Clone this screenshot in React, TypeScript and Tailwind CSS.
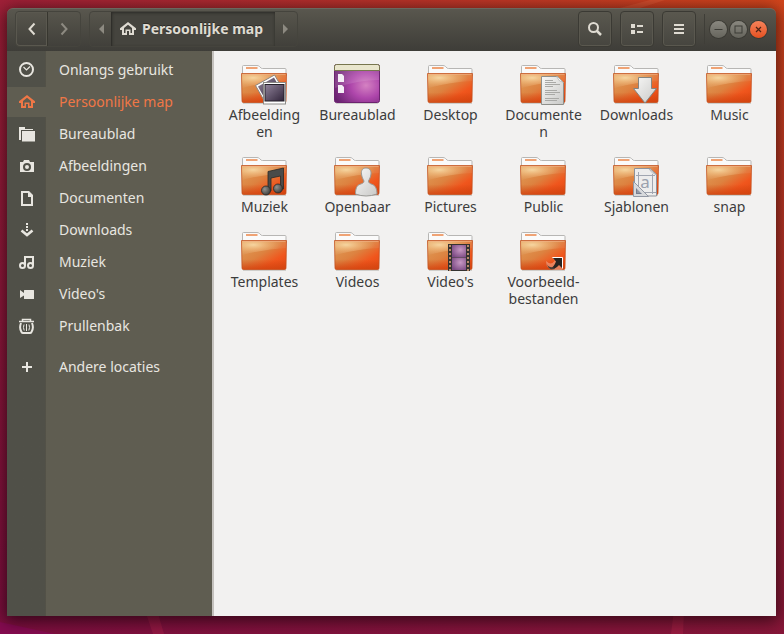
import type { ReactNode } from "react";

const places = [
  { name: "Onlangs gebruikt", icon: "recent" },
  { name: "Persoonlijke map", icon: "home", active: true },
  { name: "Bureaublad", icon: "folder" },
  { name: "Afbeeldingen", icon: "camera" },
  { name: "Documenten", icon: "document" },
  { name: "Downloads", icon: "download" },
  { name: "Muziek", icon: "music" },
  { name: "Video's", icon: "video" },
  { name: "Prullenbak", icon: "trash" },
];

const files = [
  { name: "Afbeelding\nen", emblem: "photos" },
  { name: "Bureaublad", emblem: "desktop" },
  { name: "Desktop" },
  { name: "Documente\nn", emblem: "document" },
  { name: "Downloads", emblem: "download" },
  { name: "Music" },
  { name: "Muziek", emblem: "music" },
  { name: "Openbaar", emblem: "person" },
  { name: "Pictures" },
  { name: "Public" },
  { name: "Sjablonen", emblem: "template" },
  { name: "snap" },
  { name: "Templates" },
  { name: "Videos" },
  { name: "Video's", emblem: "film" },
  { name: "Voorbeeld-\nbestanden", emblem: "link" },
];

const placeIcons: Record<string, ReactNode> = {
  recent: (
    <g fill="none" stroke="currentColor">
      <circle cx="7.5" cy="7.5" r="6.5" strokeWidth="2" />
      <path d="M4.5 5 7.5 8 11 4.5" strokeWidth="1.2" />
    </g>
  ),
  home: (
    <path
      d="M8 1 0 7.3V9H2V14H7V10H9V14H14V9H16V7.300ZM8 3.700 12 7V12H10.500V8.500H5.500V12H4V7Z"
      fill="currentColor"
      fillRule="evenodd"
    />
  ),
  folder: (
    <path
      d="M0 1H6V3H14V4H2V14H0ZM3 5H16V15.500H3Z"
      fill="currentColor"
    />
  ),
  camera: (
    <path
      d="M1 4H4L5 2H10L11 4H15V14H1ZM8 5A4 4 0 1 0 8 13 4 4 0 1 0 8 5ZM8 7A2 2 0 1 1 8 11 2 2 0 1 1 8 7Z"
      fill="currentColor"
      fillRule="evenodd"
    />
  ),
  document: (
    <path
      d="M2 1H10L14 5V16H2ZM4 3V14H12V7H9V3Z"
      fill="currentColor"
      fillRule="evenodd"
    />
  ),
  download: (
    <g>
      <path d="M7 1H9V3H7ZM7 4H9V6H7ZM7 7H9V9H7Z" fill="currentColor" />
      <path d="M2.500 8.500 8 13 13.500 8.500" fill="none" stroke="currentColor" strokeWidth="2.600" />
    </g>
  ),
  music: (
    <g fill="none" stroke="currentColor" strokeWidth="2">
      <circle cx="3.500" cy="11.500" r="2.500" />
      <circle cx="11.500" cy="11.500" r="2.500" />
      <path d="M6 11.500V3H14V11.500" />
    </g>
  ),
  video: (
    <path
      d="M1 4 5 7V4.500Q5 4 5.500 4H14.500Q15 4 15 4.500V12.500Q15 13 14.500 13H5.500Q5 13 5 12.500V9.500L1 12Z"
      fill="currentColor"
    />
  ),
  trash: (
    <g fill="none" stroke="currentColor">
      <path d="M3.500 3V1.500H11.500V3" strokeWidth="1.500" />
      <path d="M0 3.500H15" strokeWidth="1.500" />
      <path
        d="M2 5Q0 10 2.500 14Q3 15 4 15H11Q12 15 12.500 14Q15 10 13 5"
        strokeWidth="2"
      />
      <path d="M5 6.500Q3.800 9.500 5.200 12.500M7.500 6V13M10 6.500Q11.200 9.500 9.800 12.500" />
    </g>
  ),
  plus: <path d="M8 3V13M3 8H13" stroke="currentColor" strokeWidth="2" />,
};

const emblems: Record<string, ReactNode> = {
  photos: (
    <g>
      <path d="M15.500 21.500 34.500 11 44 27 25 38Z" fill="#fff" stroke="#8b8680" />
      <path d="M18 22.500 34 13.500 41 26 25 35Z" fill="url(#photo)" />
      <rect x="23.500" y="18.500" width="22" height="21.500" fill="#fff" stroke="#8b8b87" />
      <rect x="25" y="20.500" width="19" height="16.500" fill="url(#photo)" stroke="#252029" />
    </g>
  ),
  document: (
    <g>
      <path d="M22.500 12.500H38.500L44.500 18.500V40.500H22.500Z" fill="url(#metal)" stroke="#8f8f8a" />
      <path d="M37.500 12.500Q40 18 44.500 18.500L39 13Z" fill="#fff" stroke="#a5a5a1" strokeWidth=".7" />
      <path
        d="M26 16.500H34M26 18.500H37M26 20.500H41M26 22.500H34M26 26.500H38M26 28.500H41M26 30.500H36M26 34.500H40M26 36.500H38"
        stroke="#a9a9a6"
      />
    </g>
  ),
  download: (
    <path
      d="M26.500 13.500H39.500V24.500H44.500L33 39 21.500 24.500H26.500Z"
      fill="url(#metal)"
      stroke="#858580"
    />
  ),
  music: (
    <g>
      <path
        d="M28 15.500 43.500 12V33H40.500V20L31 22V35H28Z"
        fill="#4b4b49"
        stroke="#292927"
        strokeWidth=".8"
      />
      <circle cx="26" cy="34.500" r="4.500" fill="url(#note)" stroke="#292927" strokeWidth=".8" />
      <circle cx="38" cy="32.500" r="4.500" fill="url(#note)" stroke="#292927" strokeWidth=".8" />
    </g>
  ),
  person: (
    <path
      d="M33 12C29.500 12 28 14.500 28.500 18C28.800 21 30 23 31 25C31 27 29 27.500 27 28.300C23.500 29.500 22.500 33 22.500 38Q33 42 44 38C44 33 42.500 29.500 39 28.300C37 27.500 35.500 27 35.500 25C36.500 23 37.700 21 38 18C38.300 14.500 36.500 12 33 12Z"
      fill="url(#metal)"
      stroke="#999995"
    />
  ),
  template: (
    <g>
      <path d="M22.500 12.500H38L44.500 18.500V40H22.500Z" fill="#ededed" stroke="#8d929a" />
      <path d="M37 13Q40 18 44 18.500Z" fill="#fff" stroke="#a9adb2" strokeWidth=".7" />
      <path d="M24 19.500H43M26.500 16V36M40.500 18V38M31 36.500H44" fill="none" stroke="#a1a6b1" />
      <text x="33" y="32" textAnchor="middle" fontFamily="Noto Sans" fontSize="17" fill="#9ba1ad">
        a
      </text>
      <path d="M21.500 25.500V40.500H36.500Z" fill="#d7d9dc" stroke="#9298a4" />
      <path d="M24 32V38H30Z" fill="#777e90" />
      <path d="M25 36H29M25 34H28" stroke="#d7d9dc" strokeWidth=".6" />
    </g>
  ),
  film: (
    <g>
      <rect x="22" y="13" width="22" height="27" fill="#353330" />
      <rect x="26" y="14" width="14" height="12" fill="url(#movie)" />
      <rect x="26" y="26.500" width="14" height="12.500" fill="url(#movie)" />
      <path
        d="M24 14V40M42 14V40"
        stroke="#b98a6a"
        strokeWidth="2"
        strokeDasharray="2 2"
      />
    </g>
  ),
  link: (
    <g>
      <path
        d="M27 30Q27 38 34 39H43.500V26H32.500L36 29.500Q32 35 27 30Z"
        fill="#fff"
        opacity=".3"
      />
      <path d="M34 27H43V37L40 34Q36 39 31 38Q35 36 37 30.500Z" fill="#272421" />
      <path d="M27 31Q28 37 34 36L36 38Q29 40 27 31Z" fill="#4b3b35" />
      <path d="M33.500 26.500H43.500V37.500" fill="none" stroke="#fff" />
    </g>
  ),
};

function IconDefs() {
  return (
    <svg className="absolute size-0" aria-hidden="true">
      <defs>
        <linearGradient id="front" x1="0" y1="0" x2="1" y2="1">
          <stop offset="0" stopColor="#dfa15b" />
          <stop offset=".45" stopColor="#dd8240" />
          <stop offset=".72" stopColor="#f0561d" />
          <stop offset="1" stopColor="#e04812" />
        </linearGradient>
        <radialGradient id="glow" cx=".26" cy=".3" r=".65">
          <stop offset="0" stopColor="#f6d39b" />
          <stop offset="1" stopColor="#f1b16a" stopOpacity="0" />
        </radialGradient>
        <linearGradient id="base" x1="0" y1="0" x2="0" y2="1">
          <stop offset=".65" stopColor="#d0430f" stopOpacity="0" />
          <stop offset="1" stopColor="#d0430f" stopOpacity=".8" />
        </linearGradient>
        <linearGradient id="metal" x1="0" y1="0" x2="1" y2="1">
          <stop offset="0" stopColor="#f8f8f7" />
          <stop offset="1" stopColor="#c9c9c7" />
        </linearGradient>
        <linearGradient id="photo" x1="0" y1="0" x2="1" y2="1">
          <stop offset="0" stopColor="#90839a" />
          <stop offset="1" stopColor="#30243a" />
        </linearGradient>
        <radialGradient id="note" cx=".35" cy=".35" r=".7">
          <stop offset="0" stopColor="#92928f" />
          <stop offset="1" stopColor="#3c3c3a" />
        </radialGradient>
        <radialGradient id="movie" cx=".6" cy=".4" r=".7">
          <stop offset="0" stopColor="#c798c3" />
          <stop offset="1" stopColor="#7c4b84" />
        </radialGradient>
        <radialGradient id="screen" cx=".7" cy=".55" r=".75">
          <stop offset="0" stopColor="#d582c2" />
          <stop offset=".45" stopColor="#ae46ab" />
          <stop offset="1" stopColor="#68226f" />
        </radialGradient>
      </defs>
    </svg>
  );
}

function FolderIcon({ emblem }: { emblem?: string }) {
  if (emblem === "desktop") {
    return (
      <svg width="49" height="42" viewBox="0 0 49 42" aria-hidden="true">
        <path d="M3 39.500H45" stroke="#b9b7b3" opacity=".6" />
        <rect x="1.500" y=".5" width="45" height="38" rx="2" fill="url(#screen)" stroke="#6c236f" />
        <path d="M2 6H46V16Q25 16 2 24Z" fill="#fff" opacity=".12" />
        <path d="M1.500 6.500V2.500Q1.500 .5 3.500 .5H44.500Q46.500 .5 46.500 2.500V6.500Z" fill="#e9e6cd" stroke="#77764e" />
        <path d="M5 10H9L11 12V18H5ZM5 21H9L11 23V29H5Z" fill="#f4eef5" />
      </svg>
    );
  }
  return (
    <svg width="49" height="42" viewBox="0 0 49 42" aria-hidden="true">
      <path d="M3 39.500H46" stroke="#b9b7b3" opacity=".6" />
      <path
        d="M2.500 12V2.500Q2.500 1.500 3.500 1.500H17Q18.500 1.500 19.500 2.500L21 4Q21.500 4.500 22.500 4.500H45Q46 4.500 46 5.500V12Z"
        fill="#fafafa"
        stroke="#b7b6b4"
      />
      <path d="M6 4H17.500" stroke="#efa375" strokeWidth="2" />
      <path d="M1.500 9.500H46.500L46 37Q46 38.500 44.500 38.500H3.500Q2 38.500 2 37Z" fill="url(#front)" />
      <path d="M1.500 9.500H46.500V17Q25 18 2 24Z" fill="url(#glow)" />
      <path d="M1.500 9.500H46.500V17Q25 18 2 24Z" fill="#fff" opacity=".06" />
      <path
        d="M1.500 9.500H46.500L46 37Q46 38.500 44.500 38.500H3.500Q2 38.500 2 37Z"
        fill="url(#base)"
        stroke="#c2501f"
        strokeOpacity=".75"
      />
      <path d="M2.500 10.500H45.500" stroke="#f3b287" opacity=".6" />
      {emblem && emblems[emblem]}
    </svg>
  );
}

function PlaceIcon({ icon }: { icon: string }) {
  return (
    <svg width="16" height="16" viewBox="0 0 16 16" aria-hidden="true">
      {placeIcons[icon]}
    </svg>
  );
}

function Place({ name, icon, active }: { name: string; icon: string; active?: boolean }) {
  return (
    <a
      href="#"
      className={
        active
          ? "flex h-[30px] items-center bg-[#5f5d51] text-[#f07746]"
          : "flex h-[30px] items-center text-[#e8e6e0]"
      }
    >
      <span className="flex w-[39px] shrink-0 justify-end pr-[11px]">
        <PlaceIcon icon={icon} />
      </span>
      <span className="pl-[13px] text-sm">{name}</span>
    </a>
  );
}

function ToolButton({ label, children }: { label: string; children: ReactNode }) {
  return (
    <button
      aria-label={label}
      className="flex h-9 w-[34px] items-center justify-center rounded border border-[#3b3a34] bg-linear-to-b from-[#5a584f] to-[#46453f] text-[#dfdbd2] inset-shadow-[0_0_0_1px_#5a584f]"
    >
      <svg width="16" height="16" viewBox="0 0 16 16" aria-hidden="true">
        {children}
      </svg>
    </button>
  );
}

function Header() {
  return (
    <header className="flex items-start rounded-t-md border-t border-[#6a685f] bg-linear-to-b from-[#59574e] to-[#3e3d38] pt-[2px] pr-[9px] pb-1 pl-2">
      <nav className="flex h-9 rounded border border-[#45443d] text-[#dfdbd2]">
        <button
          aria-label="Terug"
          className="flex w-8 items-center justify-center rounded-l border-r border-[#37362f] inset-shadow-[0_0_0_1px_#5a584f]"
        >
          <svg width="16" height="16" viewBox="0 0 16 16" fill="none" aria-hidden="true">
            <path d="M10.500 2.500 5.500 8 10.500 13.500" stroke="currentColor" strokeWidth="2" />
          </svg>
        </button>
        <button aria-label="Vooruit" className="flex w-8 items-center justify-center text-[#8d8a81]">
          <svg width="16" height="16" viewBox="0 0 16 16" fill="none" aria-hidden="true">
            <path d="M5.500 2.500 10.500 8 5.500 13.500" stroke="currentColor" strokeWidth="2" />
          </svg>
        </button>
      </nav>
      <nav className="ml-2 flex h-9 rounded border border-[#45443d] text-[#8d8a81]">
        <button aria-label="Vorige map" className="flex w-[21px] items-center justify-center">
          <svg width="6" height="10" viewBox="0 0 6 10" aria-hidden="true">
            <path d="M6 0V10L1 5Z" fill="currentColor" />
          </svg>
        </button>
        <button className="flex items-center gap-[6px] border-l border-[#2f2e2a] bg-[#45443e] pr-3 pl-2 text-sm font-bold text-[#dfdbd2] inset-shadow-[0_1px_3px_#2c2b27] text-shadow-[0_-1px_0_#2c2b27]">
          <PlaceIcon icon="home" />
          Persoonlijke map
        </button>
        <button aria-label="Volgende map" className="flex w-[22px] items-center justify-center">
          <svg width="6" height="10" viewBox="0 0 6 10" aria-hidden="true">
            <path d="M0 0V10L5 5Z" fill="currentColor" />
          </svg>
        </button>
      </nav>
      <div className="ml-auto flex items-center gap-2">
        <ToolButton label="Zoeken">
          <circle cx="6.500" cy="6.500" r="4.500" fill="none" stroke="currentColor" strokeWidth="2" />
          <path d="M9.500 9.500 14 14" stroke="currentColor" strokeWidth="2.500" />
        </ToolButton>
        <ToolButton label="Lijstweergave">
          <path d="M2 3H6V7H2ZM2 9H6V13H2ZM8 4H14V6H8ZM8 10H14V12H8Z" fill="currentColor" />
        </ToolButton>
        <ToolButton label="Menu">
          <path d="M3 3H13V5H3ZM3 7H13V9H3ZM3 11H13V13H3Z" fill="currentColor" />
        </ToolButton>
        <div className="flex h-[30px] items-center gap-[3px] border-l border-[#3f3e38] pl-[5px]">
          <button aria-label="Minimaliseren" className="size-[17px] rounded-full bg-linear-to-b from-[#8a8880] to-[#66655d] ring-1 ring-[#3b3a34]">
            <svg viewBox="0 0 17 17" fill="none" stroke="#3d3c36" aria-hidden="true">
              <path d="M4.500 8.500H12.500" />
            </svg>
          </button>
          <button aria-label="Maximaliseren" className="size-[17px] rounded-full bg-linear-to-b from-[#8a8880] to-[#66655d] ring-1 ring-[#3b3a34]">
            <svg viewBox="0 0 17 17" fill="none" stroke="#3d3c36" aria-hidden="true">
              <rect x="5" y="5" width="7" height="7" />
            </svg>
          </button>
          <button aria-label="Sluiten" className="size-[17px] rounded-full bg-linear-to-b from-[#f68259] to-[#e4501e] ring-1 ring-[#3b3a34]">
            <svg viewBox="0 0 17 17" fill="none" stroke="#4d2416" strokeWidth="1.200" aria-hidden="true">
              <path d="M6 6 11 11M11 6 6 11" />
            </svg>
          </button>
        </div>
      </div>
    </header>
  );
}

function Sidebar() {
  return (
    <aside className="flex w-[207px] shrink-0 flex-col border-r-2 border-[#c4c1bd] bg-linear-to-r from-[#505048] from-[38px] via-[#47463e] via-[38px] to-[#5f5d51] to-[39px] pt-1">
      <nav className="flex flex-col gap-[2px]">
        {places.map((place) => (
          <Place key={place.name} {...place} />
        ))}
      </nav>
      <div className="mt-[11px]">
        <Place name="Andere locaties" icon="plus" />
      </div>
    </aside>
  );
}

function Wallpaper() {
  return (
    <svg
      className="absolute inset-0 size-full"
      viewBox="0 0 784 634"
      preserveAspectRatio="none"
      aria-hidden="true"
    >
      <path d="M0 622 55 634H0Z" fill="#850b50" />
      <path d="M145 610H157L164 634H153ZM674 610H684L683 634H671Z" fill="#e0355a" opacity=".2" />
      <path d="M620 8 650 0H665L640 8Z" fill="#ff8a60" opacity=".18" />
    </svg>
  );
}

function App() {
  return (
    <div className="relative flex min-h-screen flex-col bg-[linear-gradient(to_top,#740a40cc,transparent),linear-gradient(to_right,#a02038,#d2451c)] pt-2 pr-2 pb-[18px] pl-[7px] font-['Noto_Sans',sans-serif]">
      <IconDefs />
      <Wallpaper />
      <main className="relative flex flex-1 flex-col rounded-t-md shadow-[0_3px_16px_2px_rgba(0,0,0,0.6)]">
        <Header />
        <div className="flex flex-1">
          <Sidebar />
          <section className="grid flex-1 grid-cols-[repeat(auto-fill,minmax(92px,1fr))] content-start gap-y-4 bg-[#f2f1f0] pt-[13px] pl-1">
            {files.map((file) => (
              <button key={file.name} className="flex flex-col items-center self-start">
                <FolderIcon emblem={file.emblem} />
                <span className="text-sm leading-[17px] whitespace-pre-line text-[#3c3c3c]">
                  {file.name}
                </span>
              </button>
            ))}
          </section>
        </div>
      </main>
    </div>
  );
}

export default App;
